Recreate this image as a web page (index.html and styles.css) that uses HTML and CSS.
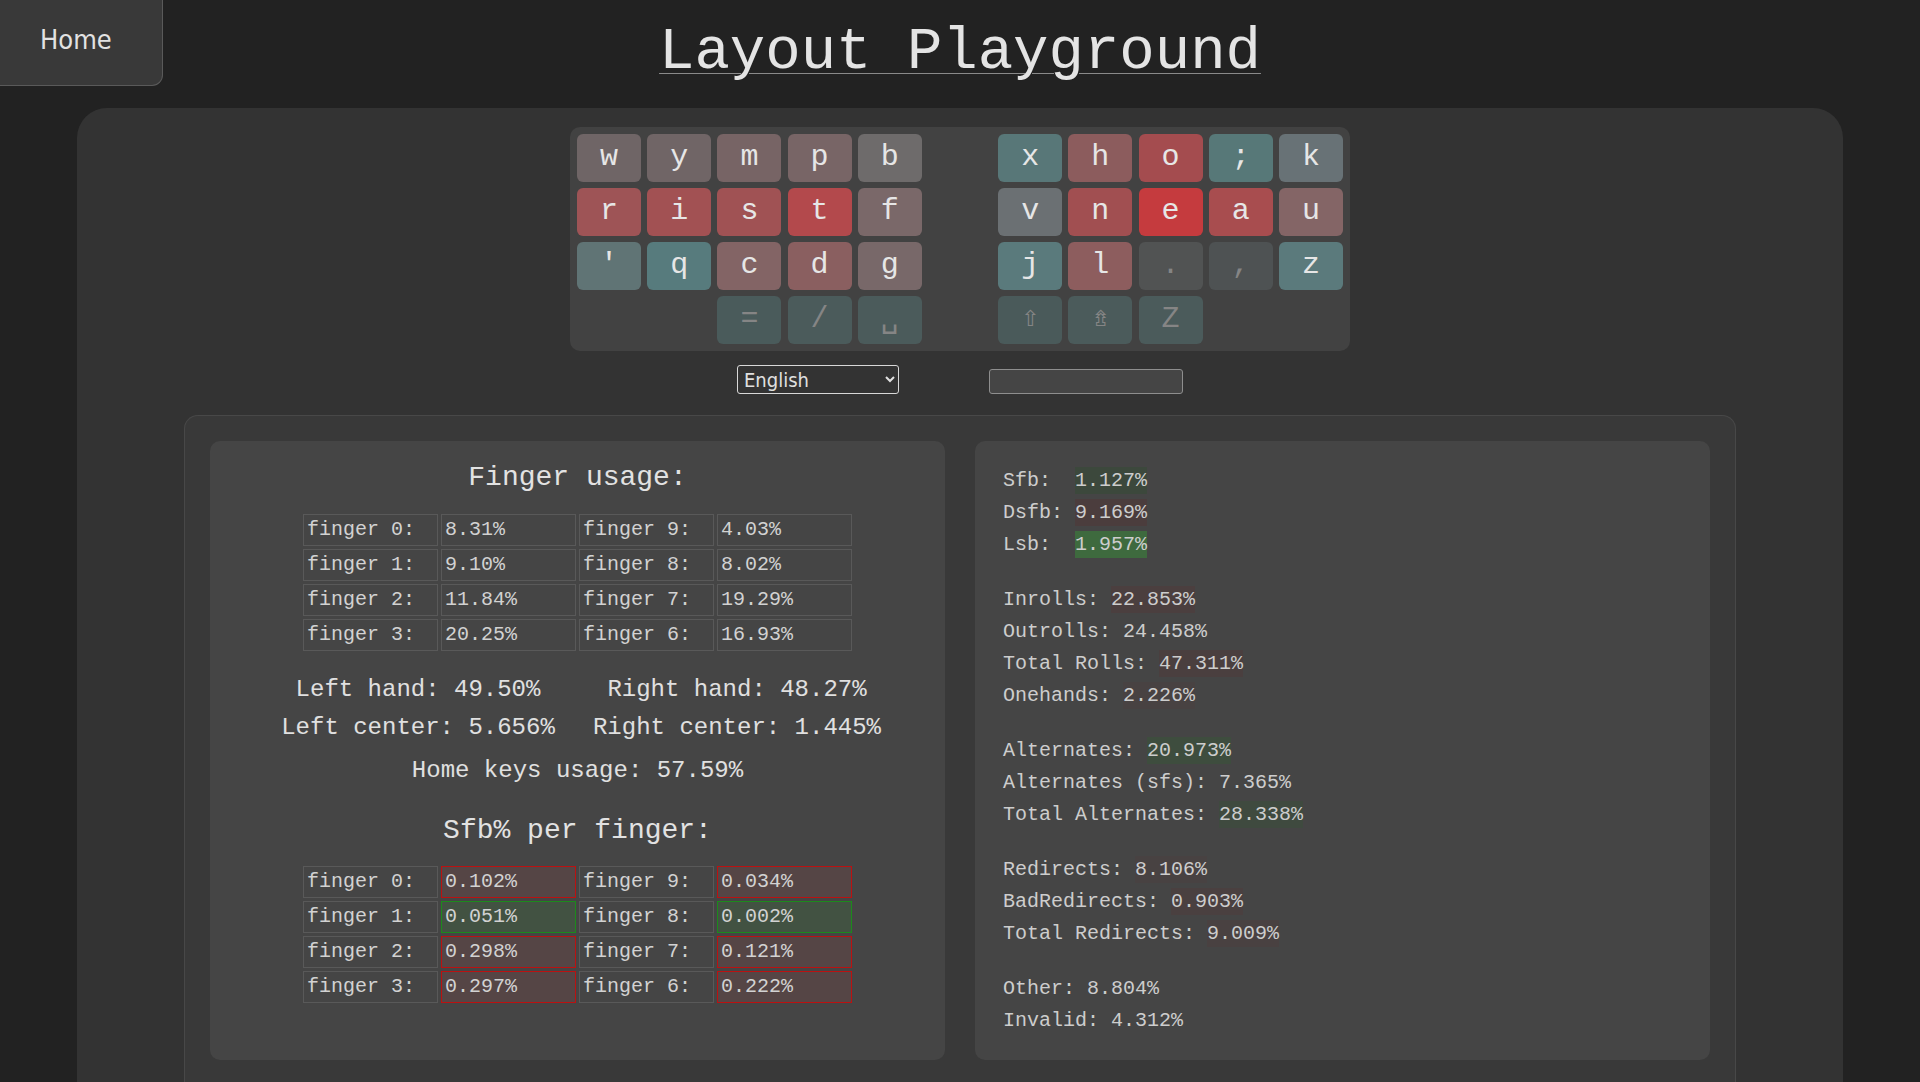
FILE: index.html
```html
<!DOCTYPE html>
<html lang="en">
<head>
<meta charset="utf-8">
<title>Layout Playground</title>
<link rel="stylesheet" href="styles.css">
</head>
<body>
<header class="top">
  <a class="home" href="#">Home</a>
  <h1 class="title"><span class="title-text">Layout Playground</span></h1>
  <div class="top-spacer"></div>
</header>

<main class="panel">
  <div class="keyboard">
    <div class="key" style="background:#6f6566">w</div>
    <div class="key" style="background:#706566">y</div>
    <div class="key" style="background:#776465">m</div>
    <div class="key" style="background:#786566">p</div>
    <div class="key" style="background:#6e6b6b">b</div>
    <div class="key-gap"></div>
    <div class="key" style="background:#587778">x</div>
    <div class="key" style="background:#8c5c5d">h</div>
    <div class="key" style="background:#a44c4f">o</div>
    <div class="key" style="background:#577878">;</div>
    <div class="key" style="background:#687276">k</div>

    <div class="key" style="background:#9e5456">r</div>
    <div class="key" style="background:#a25153">i</div>
    <div class="key" style="background:#a05254">s</div>
    <div class="key" style="background:#b3494c">t</div>
    <div class="key" style="background:#7a6869">f</div>
    <div class="key-gap"></div>
    <div class="key" style="background:#6b7073">v</div>
    <div class="key" style="background:#a14f51">n</div>
    <div class="key" style="background:#c53b3e">e</div>
    <div class="key" style="background:#a84d4f">a</div>
    <div class="key" style="background:#846566">u</div>

    <div class="key" style="background:#607475">'</div>
    <div class="key" style="background:#577b7d">q</div>
    <div class="key" style="background:#836465">c</div>
    <div class="key" style="background:#8a5f60">d</div>
    <div class="key" style="background:#786869">g</div>
    <div class="key-gap"></div>
    <div class="key" style="background:#5a7a7c">j</div>
    <div class="key" style="background:#8d5d5e">l</div>
    <div class="key key-dim" style="background:#515353">.</div>
    <div class="key key-dim" style="background:#4e5253">,</div>
    <div class="key" style="background:#5b7a7c">z</div>

    <div class="key-gap"></div>
    <div class="key-gap"></div>
    <div class="key key-dim" style="background:#4a5b5b">=</div>
    <div class="key key-dim" style="background:#4b5b5b">/</div>
    <div class="key key-dim" style="background:#4b5b5b">␣</div>
    <div class="key-gap"></div>
    <div class="key key-dim key-sym" style="background:#4a5a5a">⇧</div>
    <div class="key key-dim key-sym" style="background:#4b5b5b">⇯</div>
    <div class="key key-dim" style="background:#4b5b5b">Z</div>
    <div class="key-gap"></div>
    <div class="key-gap"></div>
  </div>

  <div class="controls">
    <select class="lang"><option>English</option></select>
    <input class="layout-name" type="text" value="">
  </div>

  <section class="stats">
    <div class="card usage">
      <h2 class="card-title">Finger usage:</h2>
      <table class="fingers">
        <tr><td>finger 0:</td><td>8.31%</td><td>finger 9:</td><td>4.03%</td></tr>
        <tr><td>finger 1:</td><td>9.10%</td><td>finger 8:</td><td>8.02%</td></tr>
        <tr><td>finger 2:</td><td>11.84%</td><td>finger 7:</td><td>19.29%</td></tr>
        <tr><td>finger 3:</td><td>20.25%</td><td>finger 6:</td><td>16.93%</td></tr>
      </table>
      <div class="hands">
        <div>Left hand: 49.50%</div>
        <div>Right hand: 48.27%</div>
        <div>Left center: 5.656%</div>
        <div>Right center: 1.445%</div>
      </div>
      <div class="home-keys">Home keys usage: 57.59%</div>
      <h2 class="card-title sfb-title">Sfb% per finger:</h2>
      <table class="fingers">
        <tr><td>finger 0:</td><td class="bad">0.102%</td><td>finger 9:</td><td class="bad">0.034%</td></tr>
        <tr><td>finger 1:</td><td class="good">0.051%</td><td>finger 8:</td><td class="good">0.002%</td></tr>
        <tr><td>finger 2:</td><td class="bad">0.298%</td><td>finger 7:</td><td class="bad">0.121%</td></tr>
        <tr><td>finger 3:</td><td class="bad">0.297%</td><td>finger 6:</td><td class="bad">0.222%</td></tr>
      </table>
    </div>

    <div class="card metrics">
      <div class="group">
        <div class="line">Sfb:  <span class="val" style="background:#3c483c">1.127%</span></div>
        <div class="line">Dsfb: <span class="val" style="background:#4b3d3d">9.169%</span></div>
        <div class="line">Lsb:  <span class="val" style="background:#3e6a3e">1.957%</span></div>
      </div>
      <div class="group">
        <div class="line">Inrolls: <span class="val" style="background:#4b3f3f">22.853%</span></div>
        <div class="line">Outrolls: <span class="val">24.458%</span></div>
        <div class="line">Total Rolls: <span class="val" style="background:#4a3f3f">47.311%</span></div>
        <div class="line">Onehands: <span class="val" style="background:#484242">2.226%</span></div>
      </div>
      <div class="group">
        <div class="line">Alternates: <span class="val" style="background:#3e4d3e">20.973%</span></div>
        <div class="line">Alternates (sfs): <span class="val">7.365%</span></div>
        <div class="line">Total Alternates: <span class="val" style="background:#3f4a3f">28.338%</span></div>
      </div>
      <div class="group">
        <div class="line">Redirects: <span class="val" style="background:#484242">8.106%</span></div>
        <div class="line">BadRedirects: <span class="val" style="background:#4a4040">0.903%</span></div>
        <div class="line">Total Redirects: <span class="val" style="background:#494141">9.009%</span></div>
      </div>
      <div class="group">
        <div class="line">Other: <span class="val">8.804%</span></div>
        <div class="line">Invalid: <span class="val">4.312%</span></div>
      </div>
    </div>
  </section>
</main>
</body>
</html>
```

FILE: styles.css
```css
* {
  box-sizing: border-box;
}

html, body {
  margin: 0;
  padding: 0;
}

body {
  background: #222222;
  color: #dddddd;
  font-family: "Liberation Mono", "DejaVu Sans Mono", monospace;
  overflow: hidden;
  height: 1082px;
}

/* ---------- header ---------- */
.top {
  display: grid;
  grid-template-columns: 1fr auto 1fr;
  height: 108px;
}

.home {
  justify-self: start;
  align-self: start;
  display: flex;
  align-items: center;
  width: 163px;
  height: 86px;
  padding: 0 0 6px 40px;
  background: #393939;
  border-right: 1px solid #5a5a5a;
  border-bottom: 1px solid #5a5a5a;
  border-radius: 0 0 11px 0;
  color: #e2e2e2;
  font-family: "Liberation Sans Narrow", "DejaVu Sans Condensed", Roboto, sans-serif;
  font-size: 27px;
  text-decoration: none;
}

.title {
  margin: 0;
  font-size: 59px;
  font-weight: normal;
  line-height: 106px;
  color: #e4e4e4;
  white-space: nowrap;
}

.title-text {
  text-decoration: underline;
  text-decoration-color: #8a8a8a;
  text-decoration-thickness: 1px;
  text-underline-offset: 5px;
}

/* ---------- main panel ---------- */
.panel {
  margin: 0 77px;
  padding-top: 19px;
  height: 974px;
  background: #333333;
  border-radius: 30px 30px 0 0;
  display: flex;
  flex-direction: column;
  align-items: center;
}

/* ---------- keyboard ---------- */
.keyboard {
  display: grid;
  grid-template-columns: repeat(11, 64px);
  grid-auto-rows: 48px;
  column-gap: 6.2px;
  row-gap: 6px;
  padding: 7px;
  background: #424242;
  border-radius: 10px;
}

.key {
  display: flex;
  align-items: center;
  justify-content: center;
  border-radius: 6px;
  color: #e6e6e6;
  font-size: 30px;
  line-height: 1;
  padding-bottom: 3px;
}

.key-dim {
  color: #858585;
}

.key-sym {
  font-family: "DejaVu Sans", sans-serif;
  font-size: 22px;
}

/* ---------- controls ---------- */
.controls {
  display: flex;
  align-items: flex-end;
  gap: 90px;
  margin-top: 14px;
  height: 29px;
}

.lang {
  width: 162px;
  height: 29px;
  background-color: #333333;
  color: #e0e0e0;
  border: 1px solid #d8d8d8;
  border-radius: 3px;
  font-family: "Liberation Sans Narrow", "DejaVu Sans Condensed", Roboto, sans-serif;
  font-size: 20px;
  padding: 0 2px;
}

.layout-name {
  width: 194px;
  height: 25px;
  background: #454545;
  border: 1px solid #8e8e8e;
  border-radius: 3px;
  color: #e0e0e0;
}

/* ---------- stats ---------- */
.stats {
  margin-top: 21px;
  width: 1552px;
  flex: 1;
  display: grid;
  grid-template-columns: 1fr 1fr;
  align-items: start;
  column-gap: 30px;
  padding: 25px 25px 0;
  background: #393939;
  border: 1px solid #484848;
  border-bottom: none;
  border-radius: 14px 14px 0 0;
}

.card {
  background: #454545;
  border-radius: 10px;
  height: 619px;
}

.usage {
  padding-top: 20.5px;
  display: flex;
  flex-direction: column;
  align-items: center;
}

.card-title {
  margin: 0;
  font-size: 28px;
  font-weight: normal;
  line-height: 32px;
  color: #e2e2e2;
}

.fingers {
  margin-top: 17px;
  width: 555px;
  table-layout: fixed;
  border-collapse: separate;
  border-spacing: 3px;
  font-size: 20px;
  color: #d2d2d2;
}

.fingers td {
  border: 1px solid #595959;
  padding: 1px 3px;
  line-height: 28px;
  white-space: nowrap;
}

.fingers td.bad {
  background: #554545;
  border-color: #bb1111;
}

.fingers td.good {
  background: #425242;
  border-color: #1c8a1c;
}

.hands {
  margin-top: 17px;
  display: grid;
  grid-template-columns: 319px 319px;
  text-align: center;
  font-size: 24px;
  line-height: 38px;
  color: #e0e0e0;
  white-space: nowrap;
}

.home-keys {
  margin-top: 5px;
  font-size: 24px;
  line-height: 38px;
  color: #e0e0e0;
}

.sfb-title {
  margin-top: 25px;
}

.sfb-title + .fingers {
  margin-top: 16px;
}

.metrics {
  padding: 24px 28px 24px;
  font-size: 20px;
  color: #cdcdcd;
}

.group + .group {
  margin-top: 23px;
}

.line {
  line-height: 32px;
  white-space: pre;
}

.val {
  padding: 2px 0;
}
```
